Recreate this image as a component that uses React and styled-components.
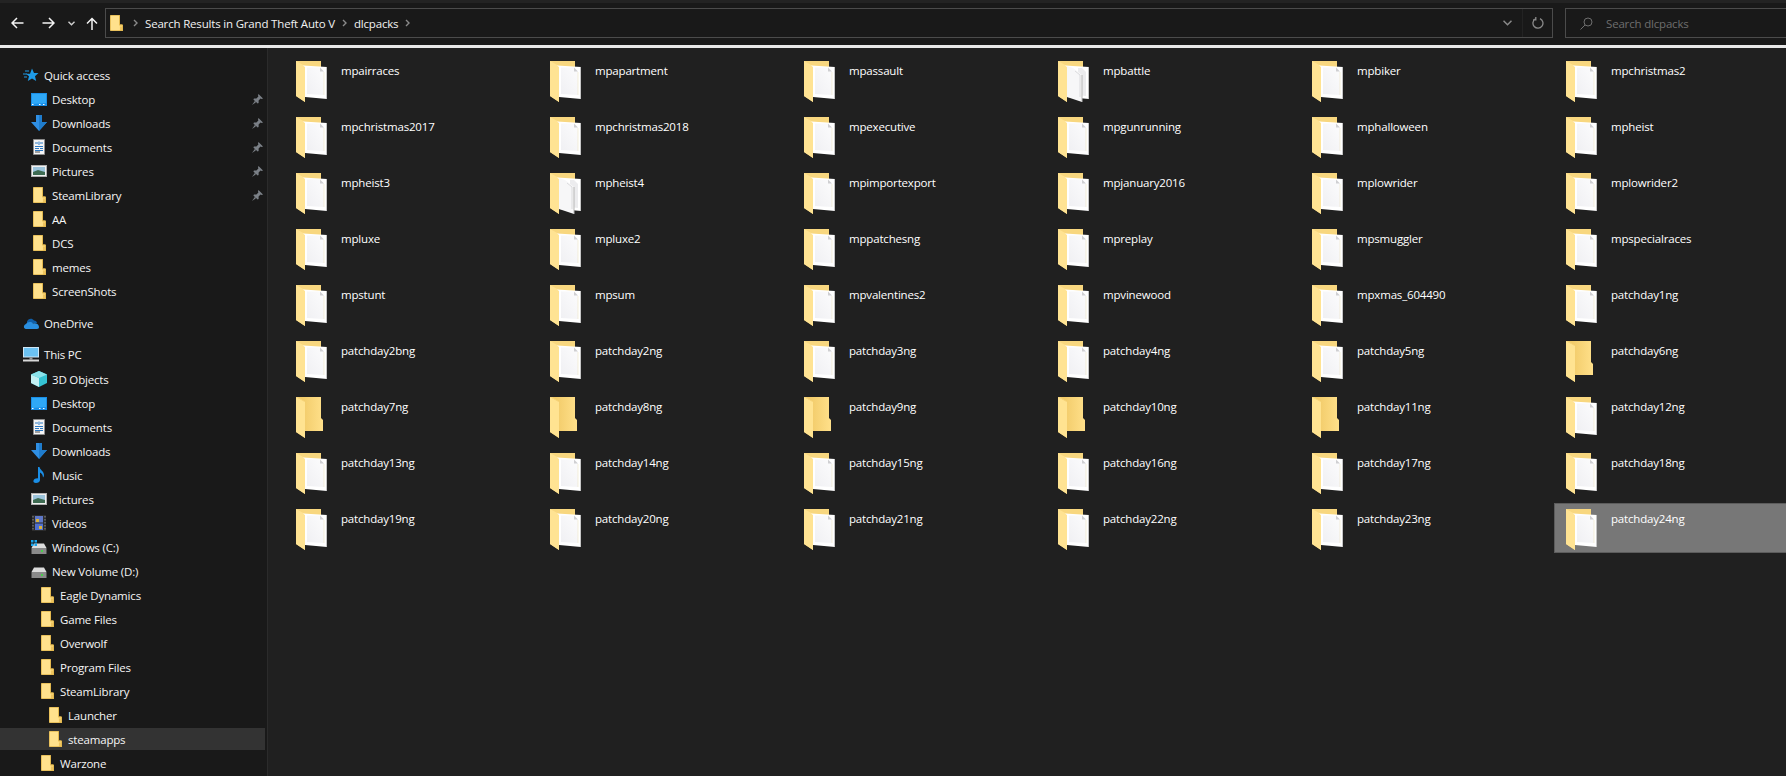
import React from 'react';
import styled, { createGlobalStyle } from 'styled-components';

const GlobalStyle = createGlobalStyle`
    html, body {
        margin: 0;
        padding: 0;
        background: #202020;
        overflow: hidden;
    }
    * {
        box-sizing: border-box;
    }
`;

const Window = styled.div`
    width: 1786px;
    height: 776px;
    display: flex;
    flex-direction: column;
    overflow: hidden;
    background: #202020;
    color: #fff;
    font-family: "Open Sans", "Noto Sans", sans-serif;
    font-size: 11.5px;
    letter-spacing: -0.18px;
`;

const Toolbar = styled.div`
    height: 48px;
    flex: none;
    display: flex;
    align-items: flex-start;
    background: #191919;
    border-top: 3px solid #232323;
    border-bottom: 3px solid #e8e8e8;
    padding-top: 5px;
`;

const NavButtons = styled.div`
    width: 105px;
    height: 30px;
    flex: none;
    display: flex;
    align-items: center;
    padding-left: 11px;
`;

const NavIcon = styled.svg`
    display: block;
    flex: none;
    margin-right: ${props => props.$gap}px;
`;

const AddressBar = styled.div`
    width: 1448px;
    height: 30px;
    flex: none;
    display: flex;
    align-items: center;
    border: 1px solid #4b4b4b;
    padding-left: 4px;
`;

const AddressFolder = styled.span`
    display: flex;
    margin-right: 10px;
`;

const Crumb = styled.span`
    color: #f2f2f2;
    white-space: nowrap;
    margin: 0 7px;
`;

const AddressEnd = styled.div`
    margin-left: auto;
    height: 100%;
    display: flex;
    align-items: center;
`;

const RefreshBox = styled.div`
    width: 30px;
    height: 100%;
    display: flex;
    align-items: center;
    justify-content: center;
    margin-left: 10px;
    border-left: 1px solid #232323;
`;

const SearchBox = styled.div`
    flex: 1;
    height: 30px;
    margin-left: 12px;
    display: flex;
    align-items: center;
    gap: 13px;
    border: 1px solid #4b4b4b;
    border-right: none;
    padding-left: 14px;
    color: #6e6e6e;
`;

const Body = styled.div`
    flex: 1;
    display: flex;
    min-height: 0;
`;

const Sidebar = styled.nav`
    width: 268px;
    flex: none;
    background: #191919;
    border-right: 1px solid #2b2b2b;
    padding: 14px 2px 0 0;
    overflow: hidden;
`;

const TreeRow = styled.div`
    height: 22px;
    display: flex;
    align-items: center;
    margin-top: ${props => props.$top || 2}px;
    padding-left: ${props => 15 + props.$level * 8}px;
    padding-right: 2px;
    background: ${props => (props.$active ? '#333333' : 'transparent')};
    color: #f5f5f5;
    white-space: nowrap;
`;

const TreeIcon = styled.span`
    width: 16px;
    height: 16px;
    flex: none;
    display: flex;
    align-items: center;
    justify-content: center;
    margin-right: 5px;
`;

const PinSlot = styled.span`
    margin-left: auto;
    display: flex;
`;

const Files = styled.main`
    flex: 1;
    display: grid;
    grid-template-columns: repeat(6, 254px);
    grid-auto-rows: 50px;
    row-gap: 6px;
    align-content: start;
    padding: 7px 0 0 16px;
    overflow: hidden;
`;

const Tile = styled.div`
    display: flex;
    align-items: flex-start;
    padding: 5px 0 0 11px;
    background: ${props => (props.$selected ? '#777777' : 'transparent')};
    border: 1px solid ${props => (props.$selected ? '#5c5c5c' : 'transparent')};
`;

const TileName = styled.span`
    color: #fff;
    line-height: 16px;
    margin: 2px 0 0 14px;
    white-space: nowrap;
`;

const PaintDefs = styled.svg`
    display: block;
    width: 0;
    height: 0;
`;

const FolderArt = styled.svg`
    display: block;
    flex: none;
    width: 31px;
    height: 41px;
`;

const Gradients = () => (
    <PaintDefs aria-hidden="true">
        <defs>
            <linearGradient id="folderBack" x1="0" x2="1" y1="0" y2="0">
                <stop offset="0" stopColor="#eec560" />
                <stop offset="1" stopColor="#ffe08a" />
            </linearGradient>
            <linearGradient id="paperFill" x1="0" x2="1" y1="1" y2="0">
                <stop offset="0" stopColor="#f0f0f3" />
                <stop offset="1" stopColor="#fcfcfd" />
            </linearGradient>
        </defs>
    </PaintDefs>
);

const BigFolder = ({ kind }) => {
    if (kind === 'empty') {
        return (
            <FolderArt viewBox="0 0 31 41">
                <path d="M0 0H25V21L27 23V34H9V41L0 35Z" fill="url(#folderBack)" />
                <path d="M0 0L9 5V41L0 35Z" fill="#ffe391" />
                <path d="M0 0L2 0L9 4.5V5Z" fill="#f7d77f" />
            </FolderArt>
        );
    }
    return (
        <FolderArt viewBox="0 0 31 41">
            <path d="M0 0H25V8H9V41L0 35Z" fill="#f8d77f" />
            <path d="M0 0L9 5V41L0 35Z" fill="#ffe393" />
            <path d="M7 4.5L31 6V38L9 36V6Z" fill="#ffffff" />
            <path d="M31 6V38L30 37.9V6Z" fill="#c4c4c4" />
            {kind === 'double' ? (
                <>
                    <path d="M24 7L28 11V35L20 34V7Z" fill="#ececee" />
                    <path d="M9 5L15 7L24 14V41L9 36Z" fill="#f7f7f8" />
                    <path d="M24 14V41" stroke="#b5b5b5" strokeWidth="1" />
                    <path d="M17 10L22 14V36" fill="none" stroke="#d4d4d6" strokeWidth="0.8" />
                </>
            ) : (
                <>
                    <path d="M11 6.5H24L28 10.5V34L11 33Z" fill="url(#paperFill)" />
                    <path d="M24 6.5L28 10.5H24Z" fill="#cfcfd2" />
                    <path d="M28 11V34" stroke="#efe6c4" strokeWidth="0.6" />
                </>
            )}
        </FolderArt>
    );
};

const SmallFolder = ({ width = 13, height = 16 }) => (
    <svg width={width} height={height} viewBox="0 0 13 16">
        <path d="M0.5 0.5H9.5V10H12.5V15.5H0.5Z" fill="#ffe18c" stroke="#e9c15c" />
        <path d="M9.5 0.5L9.5 10H12.5V15.5H9.5" fill="#ffdd80" stroke="#e4b94f" />
        <path d="M10 11.5H12V15H10Z" fill="#eec45f" />
    </svg>
);

const StarIcon = () => (
    <svg width="16" height="16" viewBox="0 0 16 16">
        <path d="M9 1.5L11 6H15.5L12 9.2L13.2 14L9 11.4L4.8 14L6 9.2L3 6.8H7Z" fill="#1e9be8" />
        <path d="M0 7H4M1 10H4M2 4H6" stroke="#1e9be8" strokeWidth="1" />
    </svg>
);

const DesktopIcon = () => (
    <svg width="16" height="13" viewBox="0 0 16 13">
        <rect width="16" height="13" fill="#1a8ee6" />
        <path d="M1 1H15V10L1 11Z" fill="#2fa8f6" />
        <path d="M1 11.5H2.5M8 11.5H9.5M12 11.5H13.5" stroke="#fff" />
    </svg>
);

const DownloadIcon = () => (
    <svg width="16" height="16" viewBox="0 0 16 16">
        <path d="M5 0H11V7H16L8 16L0 7H5Z" fill="#2f8fe4" />
        <path d="M8 0H11V7H16L8 16Z" fill="#1f7ccc" />
    </svg>
);

const DocumentIcon = () => (
    <svg width="16" height="16" viewBox="0 0 16 16">
        <path d="M2.5 0.5H13.5V15.5H2.5Z" fill="#f4f4f4" stroke="#8d8d8d" />
        <path d="M4 4H7M8 2.5V6M9 4H12M4 7.5H12M4 9.5H8M4 11.5H12M9 9.5H12" stroke="#2b78c2" />
        <path d="M4 13H9" stroke="#4a4a4a" />
    </svg>
);

const PicturesIcon = () => (
    <svg width="16" height="12" viewBox="0 0 16 12">
        <rect x="0.5" y="0.5" width="15" height="11" fill="#f0f0f0" stroke="#b0b0b0" />
        <rect x="2" y="2" width="12" height="8" fill="#9cc4dc" />
        <path d="M2 7L7 5L14 7V10H2Z" fill="#3e6b52" />
    </svg>
);

const CloudIcon = () => (
    <svg width="16" height="11" viewBox="0 0 16 11">
        <path d="M4 3.5C5 0.5 9 -0.5 11 2.5C13 2.5 14 4 14 5H4Z" fill="#0f5ea8" />
        <path d="M3 11C0.5 11 0 7 3 6C4 4 8 3 10 5.5C13 4.5 16 6.5 16 9C16 10 15.5 11 14 11Z" fill="#2a8fe0" />
    </svg>
);

const MonitorIcon = () => (
    <svg width="16" height="15" viewBox="0 0 16 15">
        <rect width="16" height="10.5" fill="#cfe6f5" />
        <rect x="1" y="1" width="14" height="8.5" fill="#6cc2f2" />
        <rect x="6.5" y="10.5" width="3" height="2" fill="#9a9a9a" />
        <rect y="12.5" width="16" height="2" fill="#d8d8d8" />
    </svg>
);

const CubeIcon = () => (
    <svg width="16" height="16" viewBox="0 0 16 16">
        <path d="M8 0L16 3.5V12L8 16L0 12V3.5Z" fill="#35c3d3" />
        <path d="M0 3.5L8 7V16L0 12Z" fill="#c3f1f4" />
        <path d="M8 0L16 3.5L8 7L0 3.5Z" fill="#8be4ec" />
    </svg>
);

const MusicIcon = () => (
    <svg width="12" height="16" viewBox="0 0 12 16">
        <path d="M5 0H6.5C7 3 11 4 11 8C11 9 10.6 10 10 10.5C10 8 8.5 6 7 5.5V13C7 15 5 16 3 16C1 16 0 15 0.5 13.5C1 12 3.5 11 5 11.5Z" fill="#1a8ee6" />
    </svg>
);

const VideoIcon = () => (
    <svg width="14" height="16" viewBox="0 0 14 16">
        <rect width="14" height="16" fill="#2c2c2c" />
        <rect x="3" y="1" width="8" height="6.5" fill="#5f78c8" />
        <rect x="3" y="8.5" width="8" height="6.5" fill="#4f6fd0" />
        <path d="M4 4H7V7H4ZM7 11H10V14H7Z" fill="#d8b23a" />
        <path d="M1 1V15M13 1V15" stroke="#8a8a8a" strokeDasharray="1.5 1.5" />
    </svg>
);

const DriveIcon = ({ windows }) => (
    <svg width="16" height="14" viewBox="0 0 16 14">
        <path d="M3 3.5H13L15.5 8H0.5Z" fill="#dcdcdc" />
        <rect x="0.5" y="8" width="15" height="6" fill="#8a8a8a" />
        <rect x="10" y="10" width="2" height="2" fill="#46d04a" />
        {windows && <path d="M0 0H2.5V2.5H0ZM3.5 0H6V2.5H3.5ZM0 3.5H2.5V6H0ZM3.5 3.5H6V6H3.5Z" fill="#18a5ee" />}
    </svg>
);

const PinIcon = () => (
    <svg width="11" height="11" viewBox="0 0 11 11">
        <path d="M6.5 0L11 4.5L9.8 5L8.5 4.6L6.6 6.6L6.6 9L5.6 9.6L1.4 5.4L2 4.4H4.4L6.4 2.4L6 1.2Z" fill="#7b8087" />
        <path d="M0 11L3 6.8L4.2 8Z" fill="#7b8087" />
    </svg>
);

const treeItems = [
    { name: 'Quick access', level: 1, icon: <StarIcon />, top: 2 },
    { name: 'Desktop', level: 2, icon: <DesktopIcon />, pin: true },
    { name: 'Downloads', level: 2, icon: <DownloadIcon />, pin: true },
    { name: 'Documents', level: 2, icon: <DocumentIcon />, pin: true },
    { name: 'Pictures', level: 2, icon: <PicturesIcon />, pin: true },
    { name: 'SteamLibrary', level: 2, icon: <SmallFolder />, pin: true },
    { name: 'AA', level: 2, icon: <SmallFolder /> },
    { name: 'DCS', level: 2, icon: <SmallFolder /> },
    { name: 'memes', level: 2, icon: <SmallFolder /> },
    { name: 'ScreenShots', level: 2, icon: <SmallFolder /> },
    { name: 'OneDrive', level: 1, icon: <CloudIcon />, top: 10 },
    { name: 'This PC', level: 1, icon: <MonitorIcon />, top: 9 },
    { name: '3D Objects', level: 2, icon: <CubeIcon />, top: 3 },
    { name: 'Desktop', level: 2, icon: <DesktopIcon /> },
    { name: 'Documents', level: 2, icon: <DocumentIcon /> },
    { name: 'Downloads', level: 2, icon: <DownloadIcon /> },
    { name: 'Music', level: 2, icon: <MusicIcon /> },
    { name: 'Pictures', level: 2, icon: <PicturesIcon /> },
    { name: 'Videos', level: 2, icon: <VideoIcon /> },
    { name: 'Windows (C:)', level: 2, icon: <DriveIcon windows /> },
    { name: 'New Volume (D:)', level: 2, icon: <DriveIcon /> },
    { name: 'Eagle Dynamics', level: 3, icon: <SmallFolder /> },
    { name: 'Game Files', level: 3, icon: <SmallFolder /> },
    { name: 'Overwolf', level: 3, icon: <SmallFolder /> },
    { name: 'Program Files', level: 3, icon: <SmallFolder /> },
    { name: 'SteamLibrary', level: 3, icon: <SmallFolder /> },
    { name: 'Launcher', level: 4, icon: <SmallFolder /> },
    { name: 'steamapps', level: 4, icon: <SmallFolder />, active: true },
    { name: 'Warzone', level: 3, icon: <SmallFolder /> },
];

const fileNames = [
    'mpairraces', 'mpapartment', 'mpassault', 'mpbattle', 'mpbiker', 'mpchristmas2',
    'mpchristmas2017', 'mpchristmas2018', 'mpexecutive', 'mpgunrunning', 'mphalloween', 'mpheist',
    'mpheist3', 'mpheist4', 'mpimportexport', 'mpjanuary2016', 'mplowrider', 'mplowrider2',
    'mpluxe', 'mpluxe2', 'mppatchesng', 'mpreplay', 'mpsmuggler', 'mpspecialraces',
    'mpstunt', 'mpsum', 'mpvalentines2', 'mpvinewood', 'mpxmas_604490', 'patchday1ng',
    'patchday2bng', 'patchday2ng', 'patchday3ng', 'patchday4ng', 'patchday5ng', 'patchday6ng',
    'patchday7ng', 'patchday8ng', 'patchday9ng', 'patchday10ng', 'patchday11ng', 'patchday12ng',
    'patchday13ng', 'patchday14ng', 'patchday15ng', 'patchday16ng', 'patchday17ng', 'patchday18ng',
    'patchday19ng', 'patchday20ng', 'patchday21ng', 'patchday22ng', 'patchday23ng', 'patchday24ng',
];

const emptyFolders = ['patchday6ng', 'patchday7ng', 'patchday8ng', 'patchday9ng', 'patchday10ng', 'patchday11ng'];
const doubleFolders = ['mpbattle', 'mpheist4'];

const folderKind = (name) => {
    if (emptyFolders.includes(name)) return 'empty';
    if (doubleFolders.includes(name)) return 'double';
    return 'paper';
};

const Chevron = () => (
    <svg width="5" height="8" viewBox="0 0 5 8">
        <path d="M1 1L4 4L1 7" fill="none" stroke="#8a8a8a" strokeWidth="1.4" />
    </svg>
);

const App = () => (
    <Window>
        <GlobalStyle />
        <Gradients />
        <Toolbar>
            <NavButtons>
                <NavIcon $gap={18} width="13" height="12" viewBox="0 0 13 12">
                    <path d="M12.5 6H1.5M6 1L1 6L6 11" fill="none" stroke="#f4f4f4" strokeWidth="1.5" />
                </NavIcon>
                <NavIcon $gap={13} width="13" height="12" viewBox="0 0 13 12">
                    <path d="M0.5 6H11.5M7 1L12 6L7 11" fill="none" stroke="#f4f4f4" strokeWidth="1.5" />
                </NavIcon>
                <NavIcon $gap={11} width="7" height="5" viewBox="0 0 7 5">
                    <path d="M0.5 0.8L3.5 3.8L6.5 0.8" fill="none" stroke="#d0d0d0" strokeWidth="1.4" />
                </NavIcon>
                <NavIcon $gap={0} width="12" height="13" viewBox="0 0 12 13">
                    <path d="M6 13V1.5M1 6.5L6 1.5L11 6.5" fill="none" stroke="#f4f4f4" strokeWidth="1.5" />
                </NavIcon>
            </NavButtons>
            <AddressBar>
                <AddressFolder><SmallFolder /></AddressFolder>
                <Chevron />
                <Crumb>Search Results in Grand Theft Auto V</Crumb>
                <Chevron />
                <Crumb>dlcpacks</Crumb>
                <Chevron />
                <AddressEnd>
                    <svg width="9" height="6" viewBox="0 0 9 6">
                        <path d="M0.5 0.8L4.5 4.8L8.5 0.8" fill="none" stroke="#8a8a8a" strokeWidth="1.5" />
                    </svg>
                    <RefreshBox>
                        <svg width="12" height="12" viewBox="0 0 12 12">
                            <path d="M3.5 1.8A5 5 0 1 0 8 1.6M3.8 0V2.8H1" fill="none" stroke="#8a8a8a" strokeWidth="1.3" />
                        </svg>
                    </RefreshBox>
                </AddressEnd>
            </AddressBar>
            <SearchBox>
                <svg width="13" height="13" viewBox="0 0 13 13">
                    <circle cx="8" cy="5" r="4" fill="none" stroke="#6e6e6e" />
                    <path d="M5 8L0.5 12.5" stroke="#6e6e6e" />
                </svg>
                Search dlcpacks
            </SearchBox>
        </Toolbar>
        <Body>
            <Sidebar>
                {treeItems.map((item, index) => (
                    <TreeRow
                        key={index}
                        $level={item.level}
                        $top={item.top}
                        $active={item.active}
                    >
                        <TreeIcon>{item.icon}</TreeIcon>
                        {item.name}
                        {item.pin && <PinSlot><PinIcon /></PinSlot>}
                    </TreeRow>
                ))}
            </Sidebar>
            <Files>
                {fileNames.map((name) => (
                    <Tile key={name} $selected={name === 'patchday24ng'}>
                        <BigFolder kind={folderKind(name)} />
                        <TileName>{name}</TileName>
                    </Tile>
                ))}
            </Files>
        </Body>
    </Window>
);

export default App;
